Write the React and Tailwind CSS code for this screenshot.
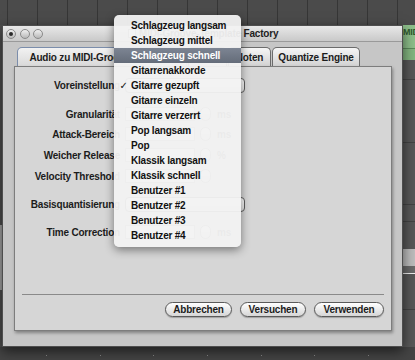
import React from "react";

const menuItems = [
  "Schlagzeug langsam",
  "Schlagzeug mittel",
  "Schlagzeug schnell",
  "Gitarrenakkorde",
  "Gitarre gezupft",
  "Gitarre einzeln",
  "Gitarre verzerrt",
  "Pop langsam",
  "Pop",
  "Klassik langsam",
  "Klassik schnell",
  "Benutzer #1",
  "Benutzer #2",
  "Benutzer #3",
  "Benutzer #4",
];

const rows = [
  { label: "Voreinstellung", kind: "popup", mt: "mt-[10px]" },
  { label: "Granularität", kind: "field", unit: "ms", mt: "mt-[13px]" },
  { label: "Attack-Bereich", kind: "field", unit: "ms", mt: "mt-[4px]" },
  { label: "Weicher Release", kind: "field", unit: "%", mt: "mt-[5px]" },
  { label: "Velocity Threshold", kind: "field", unit: "", mt: "mt-[5px]" },
  { label: "Basisquantisierung", kind: "popup", mt: "mt-[12px]" },
  { label: "Time Correction", kind: "field", unit: "ms", mt: "mt-[12px]" },
];

function Light({ dot }) {
  return (
    <div className="flex h-[10px] w-[10px] items-center justify-center rounded-full border border-[#8a8a8a] bg-linear-to-b from-[#f0f0f0] to-[#b8b8b8]">
      {dot && <div className="h-[4px] w-[4px] rounded-full bg-[#2a2a2a]" />}
    </div>
  );
}

function Control({ row }) {
  if (row.kind === "popup") {
    return (
      <div className="ml-[5px] h-[15px] w-[120px] rounded-[4px] border border-[#5e5e5e] bg-linear-to-b from-white to-[#e2e2e2]" />
    );
  }
  return (
    <div className="ml-[5px] flex items-center">
      <div className="h-[14px] w-[70px] border border-[#9c9c9c] bg-white" />
      <div className="ml-[5px] h-[14px] w-[11px] rounded-full border border-[#8a8a8a] bg-linear-to-b from-white to-[#dcdcdc]" />
      <span className="ml-[6px] text-[#555]">{row.unit}</span>
    </div>
  );
}

function Tab({ w, children, active }) {
  return (
    <div
      className={
        active
          ? `${w} flex h-[19px] shrink-0 items-center justify-center rounded-t-[5px] border border-b-0 border-[#7b8dab] bg-linear-to-b from-[#f2f2f2] to-[#d9d9d9]`
          : `${w} flex h-[19px] shrink-0 items-center justify-center rounded-t-[5px] border border-b-0 border-[#6c6c6c] bg-linear-to-b from-[#f6f6f6] to-[#d2d2d2]`
      }
    >
      {children}
    </div>
  );
}

function PillButton({ w, children }) {
  return (
    <div
      className={`${w} flex h-[15px] items-center justify-center rounded-full border border-[#5a5a5a] bg-linear-to-b from-white to-[#d6d6d6] shadow-[0_1px_1px_rgba(0,0,0,0.25)]`}
    >
      {children}
    </div>
  );
}

export default function App() {
  return (
    <div className="relative flex h-[360px] w-[415px] flex-col overflow-hidden bg-[#474747] font-['Liberation_Sans',Arial,sans-serif] text-[10px] font-bold tracking-[-0.2px] text-[#1c1c1c]">
      {/* track area above the window */}
      <div className="h-[25px] shrink-0 bg-[#4b4b4b] bg-[repeating-linear-gradient(90deg,#363636_0px,#363636_1px,transparent_1px,transparent_30px)] bg-[position:7px_0]" />

      <div className="flex h-[322px] shrink-0">
        <div className="flex w-[2px] shrink-0 flex-col bg-[#505050]">
          <div className="mt-[200px] h-[65px] bg-[#a8a8a8]" />
        </div>

        {/* window */}
        <div className="relative z-10 flex w-[401px] shrink-0 flex-col border border-[#4e4e4e] bg-[#c6c6c6] shadow-[0_4px_12px_rgba(0,0,0,0.6)]">
          <div className="flex h-[16px] items-center border-b border-[#9a9a9a] bg-linear-to-b from-[#e8e8e8] to-[#c9c9c9] pl-[3px]">
            <div className="flex gap-[3.5px]">
              <Light dot />
              <Light />
              <Light />
            </div>
            <div className="ml-[85px] flex items-center gap-[3px] text-[#222]">
              <div className="h-[9px] w-[8px] border border-[#777] bg-white" />
              <span>MIDI-Groove-Template Factory</span>
            </div>
          </div>

          <div className="flex flex-1 flex-col pl-[11px] pr-[10px] pt-[5px] pb-[14px]">
            <div className="flex gap-[1px] pl-[3px]">
              <Tab w="w-[170px]" active>
                Audio zu MIDI-Groove-Template
              </Tab>
              <Tab w="w-[39px]">Audio</Tab>
              <Tab w="w-[43px]">Noten</Tab>
              <Tab w="w-[88px]">Quantize Engine</Tab>
            </div>

            <div className="flex h-[265px] flex-col border border-[#7d7d7d] bg-[#d6d6d6] shadow-[1px_2px_3px_rgba(0,0,0,0.35)]">
              {rows.map((r) => (
                <div key={r.label} className={`${r.mt} flex h-[16px] items-center`}>
                  <div className="w-[105px] shrink-0 text-right">{r.label}</div>
                  <Control row={r} />
                </div>
              ))}

              <div className="flex-1" />
              <div className="mx-[7px] h-px bg-[#8a8a8a]" />
              <div className="mt-[7px] mb-[13px] flex justify-end gap-[8px] pr-[7px]">
                <PillButton w="w-[67px]">Abbrechen</PillButton>
                <PillButton w="w-[66px]">Versuchen</PillButton>
                <PillButton w="w-[70px]">Verwenden</PillButton>
              </div>
            </div>
          </div>
        </div>

        {/* tracks to the right of the window */}
        <div className="flex min-w-0 flex-1 flex-col overflow-hidden bg-[#585858]">
          <div className="h-[23px] overflow-hidden whitespace-nowrap bg-[#8dbf8a] text-[9px] leading-[14px] text-[#2f5a2f]">
            MIDI
          </div>
          <div className="h-px bg-[#5b8a5b]" />
          <div className="h-[11px] bg-[#83b680]" />
          <div className="h-[19px]" />
          <div className="h-px bg-[#444]" />
          <div className="h-[62px]" />
          <div className="h-px bg-[#444]" />
          <div className="h-[61px]" />
          <div className="h-px bg-[#444]" />
          <div className="h-[16px]" />
          <div className="h-px bg-[#444]" />
          <div className="h-[27px]" />
          <div className="h-[17px] bg-[#bdbdbd]" />
          <div className="h-[7px] bg-[#6a6a6a]" />
          <div className="h-px bg-[#f0f0f0]" />
          <div className="h-[35px]" />
          <div className="h-px bg-[#444]" />
        </div>
      </div>

      <div className="flex flex-1 items-center justify-around bg-[#444] px-[20px] pt-[4px]">
        {[0, 1, 2, 3, 4, 5, 6].map((i) => (
          <div key={i} className="h-px w-px bg-[#8a8a8a]" />
        ))}
      </div>

      {/* open popup menu */}
      <div className="absolute left-[114px] top-[15px] z-20 w-[127px] rounded-[5px] bg-[rgba(242,242,242,0.95)] pt-[3px] pb-[4px] shadow-[0_3px_10px_rgba(0,0,0,0.45)]">
        {menuItems.map((item, i) => (
          <div
            key={item}
            className={
              i === 2
                ? "flex h-[15px] items-center bg-linear-to-b from-[#7d8593] to-[#646c79] text-white"
                : "flex h-[15px] items-center text-[#111]"
            }
          >
            <span className="w-[17px] shrink-0 pl-[2px] text-center font-['DejaVu_Sans',sans-serif] text-[10px]">
              {i === 4 ? "✓" : ""}
            </span>
            <span>{item}</span>
          </div>
        ))}
      </div>
    </div>
  );
}
